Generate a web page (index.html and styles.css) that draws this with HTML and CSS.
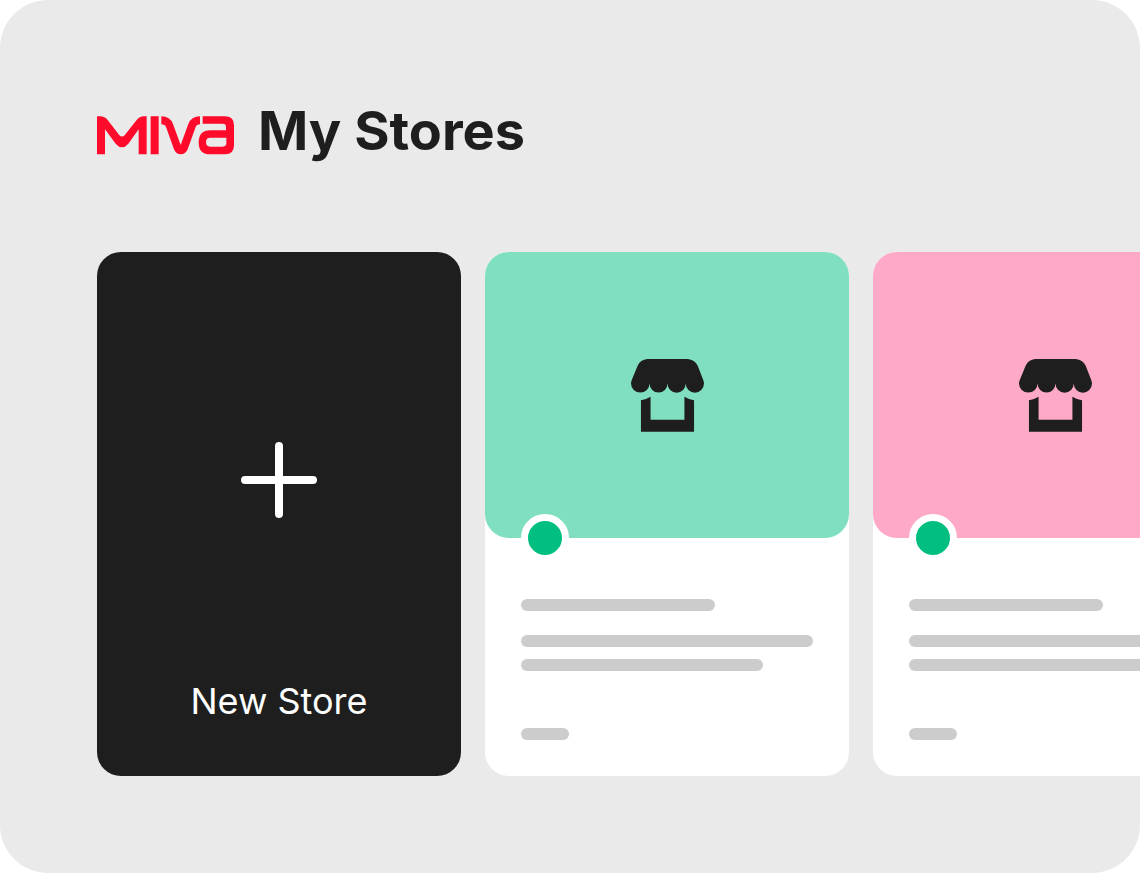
FILE: index.html
```html
<!DOCTYPE html>
<html lang="en">
<head>
    <meta charset="UTF-8">
    <meta name="viewport" content="width=device-width, initial-scale=1.0">
    <title>Miva - My Stores</title>
    <link rel="stylesheet" href="styles.css">
</head>
<body>
    <main class="panel">
        <header class="header">
            <svg class="logo" viewBox="31 59 411 117" role="img" aria-label="Miva">
                <path d="M31 60H40Q54 60 63 71L97 115Q106 126 115 115L150 71Q159 60 171 60H180V174H156V99L125 142Q106 164 87 142L55 99V174H31Z"/>
                <path d="M192 60H216V174H192Z"/>
                <path d="M224 60Q250 60 259 83L282 146L305 83Q314 60 340 60V84Q330 84 327 92L303 159Q297 174 282 174Q268 174 262 159L238 92Q235 84 224 84Z"/>
                <path fill-rule="evenodd" d="M348 60H415Q442 60 442 87V147Q442 174 415 174H371Q336 174 336 139Q336 102 371 102H418V92Q418 82 408 82H348ZM371 124Q358 124 358 137Q358 151 371 151H408Q419 151 419 141V124Z"/>
            </svg>
            <h1>My Stores</h1>
        </header>

        <div class="stores">
            <button class="card new-store" type="button">
                <svg class="plus" viewBox="0 0 76 76" aria-hidden="true">
                    <path d="M38 4V72M4 38H72"/>
                </svg>
                <span>New Store</span>
            </button>

            <article class="card">
                <div class="banner green">
                    <svg class="store-icon" viewBox="31 26 220 220" aria-hidden="true">
                        <path d="M80 26H202Q223 28 232 46L249 90Q251 95 251 100A27 27 0 0 1 196 100A27 27 0 0 1 141 100A27 27 0 0 1 87 100A28 27 0 0 1 31 100Q31 95 33 90L51 46Q59 28 80 26Z"/>
                        <path d="M61 150Q76 149 90 140V209H192V140Q206 149 221 150V245H61Z"/>
                    </svg>
                    <span class="status"></span>
                </div>
                <div class="details">
                    <div class="line name"></div>
                    <div class="line"></div>
                    <div class="line short"></div>
                    <div class="line tag"></div>
                </div>
            </article>

            <article class="card">
                <div class="banner pink">
                    <svg class="store-icon" viewBox="31 26 220 220" aria-hidden="true">
                        <path d="M80 26H202Q223 28 232 46L249 90Q251 95 251 100A27 27 0 0 1 196 100A27 27 0 0 1 141 100A27 27 0 0 1 87 100A28 27 0 0 1 31 100Q31 95 33 90L51 46Q59 28 80 26Z"/>
                        <path d="M61 150Q76 149 90 140V209H192V140Q206 149 221 150V245H61Z"/>
                    </svg>
                    <span class="status"></span>
                </div>
                <div class="details">
                    <div class="line name"></div>
                    <div class="line"></div>
                    <div class="line short"></div>
                    <div class="line tag"></div>
                </div>
            </article>
        </div>
    </main>
</body>
</html>
```
FILE: styles.css
```css
* {
    box-sizing: border-box;
}

body {
    margin: 0;
    background: #ffffff;
    color: #1e1e1e;
    font-family: Inter, "Liberation Sans", sans-serif;
}

.panel {
    padding: 95px 0 97px 97px;
    background: #eaeaea;
    border-radius: 48px;
    overflow: hidden;
}

.header {
    display: flex;
    align-items: center;
    gap: 24px;
    margin-bottom: 85px;
}

.logo {
    width: 137px;
    height: 39px;
    margin-top: 8px;
    fill: #ff0a2b;
}

h1 {
    margin: 0;
    font-size: 54px;
    line-height: 72px;
    font-weight: 700;
}

.stores {
    display: flex;
    gap: 24px;
}

.card {
    flex: 0 0 364px;
    min-height: 524px;
    background: #ffffff;
    border-radius: 24px;
}

.new-store {
    display: flex;
    flex-direction: column;
    align-items: center;
    justify-content: space-between;
    padding: 190px 24px 51px;
    border: 0;
    background: #1e1e1e;
    color: #ffffff;
    font-family: inherit;
    font-size: 36px;
    line-height: 48px;
    cursor: pointer;
}

.plus {
    width: 76px;
    height: 76px;
    stroke: #ffffff;
    stroke-width: 8;
    stroke-linecap: round;
}

.banner {
    position: relative;
    display: flex;
    align-items: center;
    justify-content: center;
    height: 286px;
    border-radius: 24px;
}

.green {
    background: #80dfc0;
}

.pink {
    background: #ffa9c8;
}

.store-icon {
    width: 73px;
    height: 73px;
    fill: #1e1e1e;
}

/* sits over the bottom edge of the banner */
.status {
    position: absolute;
    left: 36px;
    bottom: -24px;
    width: 48px;
    height: 48px;
    border: 7px solid #ffffff;
    border-radius: 50%;
    background: #00bf80;
}

.details {
    padding: 61px 36px 36px;
}

.line {
    height: 12px;
    margin-bottom: 12px;
    border-radius: 6px;
    background: #cccccc;
}

.name {
    width: 194px;
    margin-bottom: 24px;
}

.short {
    width: 242px;
    margin-bottom: 57px;
}

.tag {
    width: 48px;
    margin-bottom: 0;
}
```
